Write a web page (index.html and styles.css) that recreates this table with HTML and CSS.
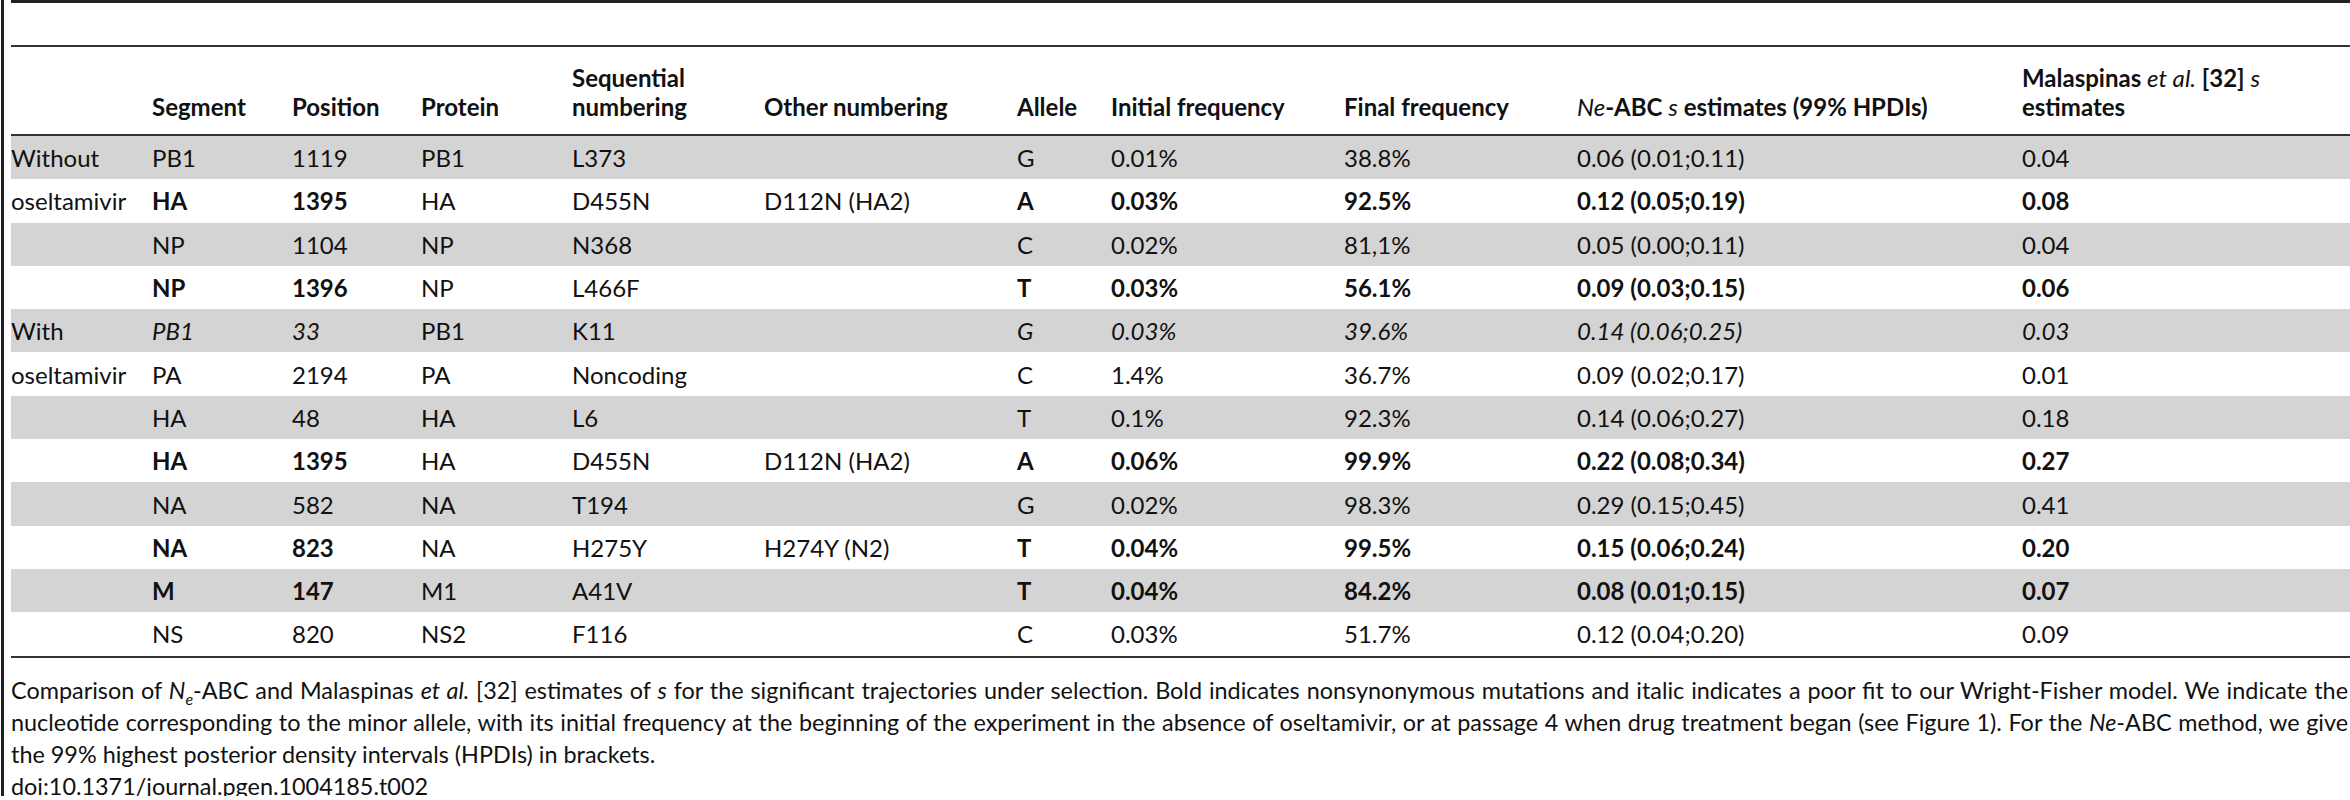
FILE: index.html
```html
<!DOCTYPE html>
<html>
	<head>
		<meta charset="utf-8">
		<title>Table 2</title>
		<link rel="stylesheet" href="styles.css">
	</head>
	<body>
		<div class="frame">
			<div class="box">
				<table class="data">
					<colgroup>
						<col class="c1"><col class="c2"><col class="c3"><col class="c4">
						<col class="c5"><col class="c6"><col class="c7"><col class="c8">
						<col class="c9"><col class="c10"><col class="c11">
					</colgroup>
					<thead>
						<tr>
							<th></th>
							<th>Segment</th>
							<th>Position</th>
							<th>Protein</th>
							<th>Sequential numbering</th>
							<th>Other numbering</th>
							<th>Allele</th>
							<th>Initial frequency</th>
							<th>Final frequency</th>
							<th><i>Ne</i>-ABC <i>s</i> estimates (99% HPDIs)</th>
							<th>Malaspinas <i>et al.</i> [32] <i>s</i> estimates</th>
						</tr>
					</thead>
					<tbody>
						<tr class="odd"><td>Without</td><td>PB1</td><td>1119</td><td>PB1</td><td>L373</td><td></td><td>G</td><td>0.01%</td><td>38.8%</td><td>0.06 (0.01;0.11)</td><td>0.04</td></tr>
						<tr class="strong"><td class="n">oseltamivir</td><td>HA</td><td>1395</td><td class="n">HA</td><td class="n">D455N</td><td class="n">D112N (HA2)</td><td>A</td><td>0.03%</td><td>92.5%</td><td>0.12 (0.05;0.19)</td><td>0.08</td></tr>
						<tr class="odd"><td></td><td>NP</td><td>1104</td><td>NP</td><td>N368</td><td></td><td>C</td><td>0.02%</td><td>81,1%</td><td>0.05 (0.00;0.11)</td><td>0.04</td></tr>
						<tr class="strong"><td></td><td>NP</td><td>1396</td><td class="n">NP</td><td class="n">L466F</td><td class="n"></td><td>T</td><td>0.03%</td><td>56.1%</td><td>0.09 (0.03;0.15)</td><td>0.06</td></tr>
						<tr class="odd slant"><td class="n">With</td><td>PB1</td><td>33</td><td class="n">PB1</td><td class="n">K11</td><td class="n"></td><td>G</td><td>0.03%</td><td>39.6%</td><td>0.14 (0.06;0.25)</td><td>0.03</td></tr>
						<tr><td>oseltamivir</td><td>PA</td><td>2194</td><td>PA</td><td>Noncoding</td><td></td><td>C</td><td>1.4%</td><td>36.7%</td><td>0.09 (0.02;0.17)</td><td>0.01</td></tr>
						<tr class="odd"><td></td><td>HA</td><td>48</td><td>HA</td><td>L6</td><td></td><td>T</td><td>0.1%</td><td>92.3%</td><td>0.14 (0.06;0.27)</td><td>0.18</td></tr>
						<tr class="strong"><td></td><td>HA</td><td>1395</td><td class="n">HA</td><td class="n">D455N</td><td class="n">D112N (HA2)</td><td>A</td><td>0.06%</td><td>99.9%</td><td>0.22 (0.08;0.34)</td><td>0.27</td></tr>
						<tr class="odd"><td></td><td>NA</td><td>582</td><td>NA</td><td>T194</td><td></td><td>G</td><td>0.02%</td><td>98.3%</td><td>0.29 (0.15;0.45)</td><td>0.41</td></tr>
						<tr class="strong"><td></td><td>NA</td><td>823</td><td class="n">NA</td><td class="n">H275Y</td><td class="n">H274Y (N2)</td><td>T</td><td>0.04%</td><td>99.5%</td><td>0.15 (0.06;0.24)</td><td>0.20</td></tr>
						<tr class="odd strong"><td></td><td>M</td><td>147</td><td class="n">M1</td><td class="n">A41V</td><td class="n"></td><td>T</td><td>0.04%</td><td>84.2%</td><td>0.08 (0.01;0.15)</td><td>0.07</td></tr>
						<tr><td></td><td>NS</td><td>820</td><td>NS2</td><td>F116</td><td></td><td>C</td><td>0.03%</td><td>51.7%</td><td>0.12 (0.04;0.20)</td><td>0.09</td></tr>
					</tbody>
				</table>
				<div class="caption">
					<span class="line">Comparison of <i>N<sub>e</sub></i>-ABC and Malaspinas <i>et al.</i> [32] estimates of <i>s</i> for the significant trajectories under selection. Bold indicates nonsynonymous mutations and italic indicates a poor fit to our Wright-Fisher model. We indicate the</span>
					<span class="line">nucleotide corresponding to the minor allele, with its initial frequency at the beginning of the experiment in the absence of oseltamivir, or at passage 4 when drug treatment began (see Figure 1). For the <i>Ne</i>-ABC method, we give</span>
					<span class="line last">the 99% highest posterior density intervals (HPDIs) in brackets.</span>
					<span class="line last">doi:10.1371/journal.pgen.1004185.t002</span>
				</div>
			</div>
		</div>
	</body>
</html>
```
FILE: styles.css
```css
body{
	margin: 0;
	font-family: Lato, "Liberation Sans", sans-serif;
	color: #111;
	background: #fff;
}
.frame{  /* dark rule down the left side */
	margin-left: 1px;
	border-left: 3px solid #1e1e1e;
	padding-left: 7px;
	height: 796px;
}
.box{
	border-top: 3px solid #222;
	padding-top: 42px;
}

/* table */
.data{
	table-layout: fixed;
	width: 2339px;
	border-collapse: separate;
	border-spacing: 0;
	border-top: 2px solid #333;
	border-bottom: 2px solid #333;
	font-size: 24px;
}
.c1{ width: 141px; }
.c2{ width: 140px; }
.c3{ width: 129px; }
.c4{ width: 151px; }
.c5{ width: 192px; }
.c6{ width: 253px; }
.c7{ width: 94px; }
.c8{ width: 233px; }
.c9{ width: 233px; }
.c10{ width: 445px; }
.c11{ width: 328px; }
.data thead tr{
	height: 89px;
}
.data th{
	text-align: left;
	vertical-align: bottom;
	font-weight: 700;
	padding: 0 24px 13px 0;
	line-height: 29px;
	border-bottom: 2px solid #333;
}
.data th i{
	font-weight: 400;
}
.data tbody tr{
	height: 43.3px;
}
.data td{
	padding: 0;
	vertical-align: middle;
	white-space: nowrap;
}
.data .odd{
	background: #d4d4d4;
}
.data .strong td{
	font-weight: 700;
}
.data .strong td.n{
	font-weight: 400;
}
.data .slant td{
	font-style: italic;
}
.data .slant td.n{
	font-style: normal;
}

/* caption under the table */
.caption{
	width: 2337px;
	margin-top: 16px;
	font-size: 23.4px;
	line-height: 32.3px;
}
.caption .line{
	display: block;
	white-space: nowrap;
	text-align: justify;
	text-align-last: justify;
}
.caption .line.last{
	text-align-last: left;
}
.caption sub{
	font-size: 16px;
	line-height: 0;
}
```
